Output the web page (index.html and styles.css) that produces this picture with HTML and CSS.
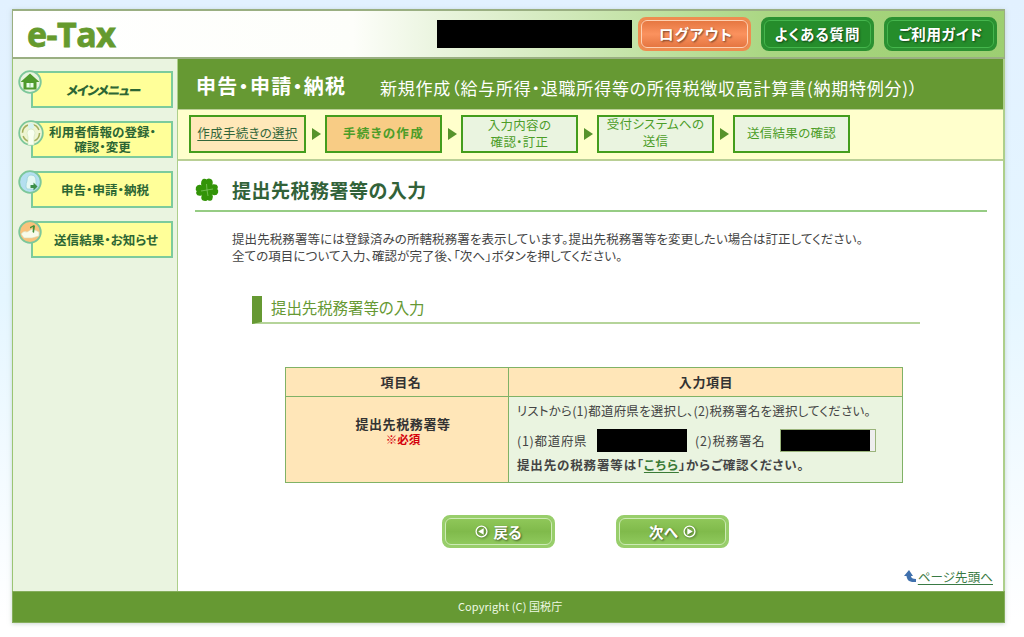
FILE: index.html
```html
<!DOCTYPE html>
<html lang="ja">
<head>
<meta charset="utf-8">
<title>e-Tax</title>
<link rel="stylesheet" href="styles.css">
</head>
<body>
<div class="page">
  <header class="header">
    <div class="logo">e-Tax</div>
    <div class="user-name"></div>
    <nav class="tools">
      <a class="tool logout"><span>ログアウト</span></a>
      <a class="tool"><span>よくある質問</span></a>
      <a class="tool guide"><span>ご利用ガイド</span></a>
    </nav>
  </header>
  <div class="columns">
    <nav class="sidebar">
      <a class="menu-item menu-main"><span>メインメニュー</span>
        <svg class="badge" viewBox="0 0 24 24"><circle cx="12" cy="12" r="10.800" fill="#e8f4df" stroke="#7cc79a" stroke-width="1.800"/><path d="M2.500 12 12 3.500l9.500 8.500h-3v7.500h-13V12z" fill="#4f9a2c"/><path d="M8.500 13h7v4.500h-7z" fill="#eaffea"/><path d="M12 13v4.500" stroke="#8bc18b"/></svg></a>
      <a class="menu-item menu-user"><span>利用者情報の登録・<br>確認・変更</span>
        <svg class="badge large" viewBox="0 0 26 26"><circle cx="13" cy="13" r="11.800" fill="#eef5d2" stroke="#7cc79a" stroke-width="1.800"/><circle cx="13" cy="13" r="8.500" fill="none" stroke="#a3ae5c" stroke-width="1.500" stroke-dasharray="10 3.350"/><circle cx="13" cy="6" r="3" fill="#d7f3ef"/><path d="M9 13q0-4 4-4t4 4l-1 4v8h-6v-8z" fill="#f8fff0" stroke="#cfe3bb" stroke-width=".6"/></svg></a>
      <a class="menu-item menu-apply"><span>申告・申請・納税</span>
        <svg class="badge" viewBox="0 0 24 24"><circle cx="12" cy="12" r="10.800" fill="#b4dff0" stroke="#7cc79a" stroke-width="1.800"/><path d="M8 17q0-4 1-6 0-6 4-6 5 0 5 6v8h-9z" fill="#e5f8f3" stroke="#93cfd5" stroke-width=".7"/><path d="M12.500 15h3v-2.500l4 4-4 4V18h-3z" fill="#3d8f49"/></svg></a>
      <a class="menu-item menu-result"><span>送信結果・お知らせ</span>
        <svg class="badge" viewBox="0 0 24 24"><circle cx="12" cy="12" r="10.800" fill="#f9c27b" stroke="#7cc79a" stroke-width="1.800"/><path d="M3 14q3-4 6-2l5-3 3 1 4 2v4l-7 2H6z" fill="#f8fbea" stroke="#d8d9ae" stroke-width=".6"/><path d="m12 7 4-2 1 1-1 7-1.500-1 .5-5-3 1.500z" fill="#42903a"/></svg></a>
    </nav>
    <main class="main">
      <div class="title-bar"><b>申告・申請・納税</b><span>新規作成（給与所得・退職所得等の所得税徴収高計算書(納期特例分)）</span></div>
      <div class="steps">
        <div class="step done"><a>作成手続きの選択</a></div><i></i>
        <div class="step current">手続きの作成</div><i></i>
        <div class="step two-lines"><span>入力内容の<br>確認・訂正</span></div><i></i>
        <div class="step two-lines higher"><span>受付システムへの<br>送信</span></div><i></i>
        <div class="step">送信結果の確認</div>
      </div>
      <div class="content">
        <h1><svg viewBox="0 0 24 24"><g fill="#339408" stroke="#339408" stroke-width="1.500" stroke-linejoin="round"><path d="M12 11.500C9 10 6 7 7 4c.5-3 3-3 4.500-1.500C13 .500 17 1 17 4.500c0 3-3 5-5 7z"/><path d="M12.500 12C14 9 17 6.500 19.500 7c3 0 3 2.500 2 4 2 2 1 5.500-2 5.500s-5-2.500-7-4.500z"/><path d="M12 12.500c3 1.500 5.500 4.500 5 7 0 3-3 3-4.500 1.500C11 23 7 22.500 7 19.500s3-5 5-7z"/><path d="M11.500 12C10 15 7 17.500 4.500 17c-3 0-3-2.500-2-4C.500 11 1.500 7.500 4.500 7.500s5 2.500 7 4.500z"/></g><path d="m12 12 6-1M12 12l-6 1M12 12l-.5-6M12 12l1 6" stroke="#8acb6d" stroke-width=".7"/></svg><span>提出先税務署等の入力</span></h1>
        <p class="lead"><span>提出先税務署等には登録済みの所轄税務署を表示しています。提出先税務署等を変更したい場合は訂正してください。</span><br><span>全ての項目について入力、確認が完了後、「次へ」ボタンを押してください。</span></p>
        <h2><span>提出先税務署等の入力</span></h2>
        <table>
          <tr><th class="name-col">項目名</th><th>入力項目</th></tr>
          <tr><th class="office"><span>提出先税務署等</span><br><em>※必須</em></th>
            <td>
              <div class="guide-text">リストから(1)都道府県を選択し、(2)税務署名を選択してください。</div>
              <div class="fields"><span class="pref">(1)都道府県</span><div class="select"></div><span class="tax">(2)税務署名</span><div class="select open"></div></div>
              <div class="confirm">提出先の税務署等は「<a>こちら</a>」からご確認ください。</div>
            </td></tr>
        </table>
        <div class="actions">
          <a class="button"><svg viewBox="0 0 12 12"><circle cx="6" cy="6" r="5" fill="none" stroke="#fff" stroke-width="1.200"/><path d="M8 3v6L3 6z" fill="#fff"/></svg><span>戻る</span></a>
          <a class="button"><span>次へ</span><svg viewBox="0 0 12 12"><circle cx="6" cy="6" r="5" fill="none" stroke="#fff" stroke-width="1.200"/><path d="M4 3v6l5-3z" fill="#fff"/></svg></a>
        </div>
        <div class="page-top"><svg viewBox="0 0 12 12"><path d="M5 0 9 6H7q0 3 5 3v3Q3 13 2.500 6H0z" fill="#3f70ad"/></svg><a>ページ先頭へ</a></div>
      </div>
    </main>
  </div>
  <footer class="footer"><span>Copyright (C) 国税庁</span></footer>
</div>
</body>
</html>
```
FILE: styles.css
```css
* { box-sizing: border-box; }
html { background: #fff; }
body {
  margin: 0;
  height: 637px;
  padding: 9px 0 0 12px;
  overflow: hidden;
  font: 12.500px/17px "Noto Sans CJK JP", sans-serif;
  font-feature-settings: "palt";
  letter-spacing: .08px;
  color: #444;
  white-space: nowrap;
  background: linear-gradient(#e2f1ff, #e5f6ff 300px, #fff 620px);
}
.page { width: 993px; height: 614px; box-shadow: 0 1px 4px #9ab0a380; background: #fff; }
.header {
  display: flex;
  align-items: center;
  height: 50px;
  padding: 0 7px 0 14px;
  border: 2px solid #9aaf82;
  border-width: 2px 1px;
  background: linear-gradient(90deg, #fff 0, #fdfefa 340px, #e9f4dd 430px, #c8e5ad 600px, #a9d681 760px, #9dcf72);
}
.logo { width: 410px; font: bold 34px/40px "Open Sans", sans-serif; letter-spacing: -.5px; color: #659a2e; -webkit-text-stroke: .8px #659a2e; }
.user-name { width: 195px; height: 28px; background: #000; }
.tools { display: flex; gap: 9px; margin-left: 6px; }
.tool, .button {
  position: relative;
  display: flex;
  align-items: center;
  justify-content: center;
  width: 113px;
  height: 34px;
  padding-bottom: 2px;
  border-radius: 8px;
  color: #fff;
  font-weight: 700;
  text-shadow: 1px 1px 2px #0008;
  background: #258d2b;
  border: 3px solid #2b9132;
}
.tool { font-size: 14.500px; letter-spacing: .9px; }
.tool + .tool { margin-left: 1px; }
.tool::before, .button::before { content: ""; position: absolute; inset: 0; border: 1px solid #45b64d; border-radius: 6px; }
.guide { letter-spacing: .6px; }
.logout { background: linear-gradient(#e4753f, #fb925e, #e3743f); border-color: #ee8c50; letter-spacing: 1.300px; padding-left: 3px; }
.logout::before { border-color: #ffd0b1; }
.columns { display: flex; height: 532px; }
.sidebar { width: 165px; padding: 12px 5px 0 18px; border-left: 1px solid #9bc574; background: #eaf4e0; }
.menu-item {
  position: relative;
  display: flex;
  align-items: center;
  justify-content: center;
  width: 142px;
  height: 37px;
  margin-bottom: 13px;
  border: 2px solid #7ccb9c;
  background: #ffff99;
  color: #2c6634;
  font-weight: 700;
  font-size: 12.500px;
  line-height: 15px;
  text-align: center;
}
.badge { position: absolute; left: -15px; top: -3px; width: 24px; height: 24px; }
.badge.large { width: 26px; height: 26px; }
.menu-main span { letter-spacing: -.9px; transform: skewX(-8deg); margin: 0 0 1px 3px; font-weight: 900; }
.menu-user span { margin: 0 0 1px 1px; }
.menu-apply span { margin: 0 0 1px 6px; }
.menu-result span { margin: 0 0 1px 8px; }
.main { display: flex; flex-direction: column; width: 828px; border: solid #adcf8b; border-width: 0 2px 0 1px; }
.title-bar { display: flex; align-items: center; height: 50px; padding-left: 18px; background: #669933; color: #fff; }
.title-bar b { width: 184px; padding-top: 3px; font-size: 20px; letter-spacing: 1.300px; }
.title-bar span { padding-top: 6px; font-size: 17px; letter-spacing: .78px; }
.steps { display: flex; align-items: center; height: 52px; padding: 0 11px 1px; background: #ffffcc; border: 2px solid #b9cf95; border-width: 1px 0 2px; color: #4c9d28; }
.step { display: flex; align-items: center; justify-content: center; width: 117px; height: 38px; border: 2px solid #449d1c; background: #eaf4e0; text-align: center; padding-bottom: 4px; letter-spacing: .3px; }
.steps i { width: 9px; height: 12px; margin: 0 4px 0 6px; background: #57932c; clip-path: polygon(0 0, 100% 50%, 0 100%); }
.done { background: #ffe8b9; color: #33663a; }
.current { background: #f8cc85; font-weight: 700; letter-spacing: 1.300px; }
.two-lines { line-height: 17px; padding-bottom: 3px; }
.higher { padding-bottom: 5px; }
a { color: inherit; }
.step a, .page-top a, .confirm a { text-decoration: underline; text-underline-offset: 2px; }
.content { flex: 1; padding: 0 16px 0 17px; }
h1 { display: flex; align-items: center; height: 51px; margin: 0; padding-top: 8px; border-bottom: 2px solid #96cc84; font-size: 19px; line-height: 28px; letter-spacing: .5px; color: #326239; }
h1 svg { width: 24px; height: 24px; margin-right: 13px; }
.lead { margin: 18px 0 0 37px; }
h2 { display: flex; align-items: center; width: 668px; height: 28px; margin: 32px 0 0 57px; padding: 0 0 4px 9px; border-left: 10px solid #669933; border-bottom: 2px solid #b5d49a; font-size: 15.500px; font-weight: 400; letter-spacing: -.1px; color: #669933; }
table { width: 618px; margin: 43px 0 0 90px; border-collapse: collapse; background: #eaf4e0; }
th, td { border: 1px solid #80b266; padding: 0; }
th { height: 29px; padding-bottom: 1px; background: #ffe6b8; color: #333; font-size: 13px; letter-spacing: .6px; }
.name-col { width: 223px; padding-left: 8px; }
th + th { padding-left: 1px; }
.office { height: 86px; line-height: 15px; padding: 0 0 16px 12px; }
em { font-style: normal; color: #d4000c; font-size: 11.500px; letter-spacing: 0; }
td { vertical-align: top; padding: 5px 0 0 8px; }
.guide-text { letter-spacing: .22px; }
.fields { display: flex; align-items: center; height: 24px; margin-top: 9px; letter-spacing: .7px; }
.pref { width: 80px; }
.tax { width: 85px; }
.select { width: 90px; height: 23px; margin-right: 8px; background: #000; }
.select.open { width: 96px; border-right: 6px solid #eee; outline: 1px solid #9ab47b; outline-offset: -1px; margin: 0; }
.confirm { margin-top: 4px; font-weight: 700; letter-spacing: .85px; }
.confirm a { color: #397a35; }
.actions { display: flex; gap: 61px; margin: 32px 0 0 247px; }
.button { height: 33px; padding-bottom: 1px; gap: 5px; background: linear-gradient(#90c85a, #80ba4b, #90ca5e); border-color: #98ce6b; font-size: 14.500px; }
.button::before { border: 1.500px solid #cdeab6; }
.button svg { width: 13px; height: 13px; filter: drop-shadow(1px 1px 1px #0006); }
.page-top { display: flex; justify-content: flex-end; align-items: center; margin: 20px -6px 0 0; color: #397a44; }
.page-top svg { width: 12px; height: 12px; margin: 0 2px 2px 0; }
.footer { height: 32px; padding: 6px 0 0 445px; background: #669933; border: 1px solid #85ad5c; color: #eff9e5; font-size: 11px; line-height: 17px; }
```
